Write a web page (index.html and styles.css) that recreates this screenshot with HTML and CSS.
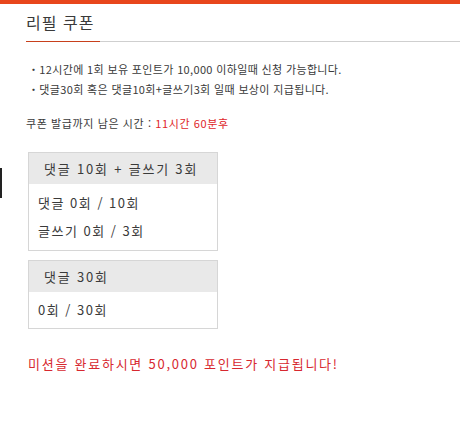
FILE: index.html
```html
<!DOCTYPE html>
<html lang="ko">
<head>
    <meta charset="UTF-8">
    <meta name="viewport" content="width=device-width, initial-scale=1.0">
    <title>리필 쿠폰</title>
    <link rel="stylesheet" href="styles.css">
</head>
<body>
    <div class="top-bar"></div>
    <div class="edge-mark"></div>

    <div class="title-wrap">
        <h1 class="title">리필 쿠폰</h1>
    </div>

    <ul class="notice">
        <li>・12시간에 1회 보유 포인트가 10,000 이하일때 신청 가능합니다.</li>
        <li>・댓글30회 혹은 댓글10회+글쓰기3회 일때 보상이 지급됩니다.</li>
    </ul>

    <p class="remain">쿠폰 발급까지 남은 시간 : <span class="remain-time">11시간 60분후</span></p>

    <div class="mission">
        <div class="mission-head">댓글 10회 + 글쓰기 3회</div>
        <div class="mission-body">
            <div class="mission-row">댓글 0회 / 10회</div>
            <div class="mission-row">글쓰기 0회 / 3회</div>
        </div>
    </div>

    <div class="mission">
        <div class="mission-head">댓글 30회</div>
        <div class="mission-body short">
            <div class="mission-row">0회 / 30회</div>
        </div>
    </div>

    <p class="reward">미션을 완료하시면 50,000 포인트가 지급됩니다!</p>
</body>
</html>
```

FILE: styles.css
```css
body {
    margin: 0;
    background: #fff;
    color: #333;
    font-family: "Noto Sans CJK KR", "Noto Sans", sans-serif;
}

.top-bar {
    height: 4px;
    background: #e8461c;
}

.edge-mark {
    position: absolute;
    left: 0;
    top: 168px;
    width: 2px;
    height: 30px;
    background: #222;
}

.title-wrap {
    margin-left: 26px;
    padding-top: 6px;
    border-bottom: 1px solid #cfcfcf;
}

.title {
    display: inline-block;
    margin: 0 0 -1px;
    padding-bottom: 8px;
    font-size: 16px;
    font-weight: normal;
    line-height: 22px;
    letter-spacing: 1px;
    color: #3a3a3a;
    border-bottom: 1px solid #c8401c;
    width: 74px;
}

.notice {
    list-style: none;
    margin: 17px 0 0 28px;
    padding: 0;
    font-size: 11px;
    line-height: 20px;
    letter-spacing: 0.35px;
    color: #3a3a3a;
}

.remain {
    margin: 14px 0 0 26px;
    font-size: 11px;
    line-height: 20px;
    letter-spacing: 0.6px;
    color: #3a3a3a;
}

.remain-time {
    color: #e0262a;
}

.mission {
    width: 188px;
    margin: 19px 0 0 28px;
    border: 1px solid #d6d6d6;
    font-size: 13px;
    color: #3a3a3a;
}

.mission + .mission {
    margin-top: 9px;
}

.mission-head {
    background: #e9e9e9;
    height: 31px;
    line-height: 31px;
    padding-left: 15px;
    letter-spacing: 1.8px;
}

.mission-body {
    padding: 5px 9px;
    letter-spacing: 1.5px;
}

.mission-body.short {
    padding: 4px 9px;
}

.mission-row {
    line-height: 28px;
}

.reward {
    margin: 25px 0 0 28px;
    font-size: 13px;
    line-height: 20px;
    letter-spacing: 1.75px;
    color: #d7282f;
}
```
